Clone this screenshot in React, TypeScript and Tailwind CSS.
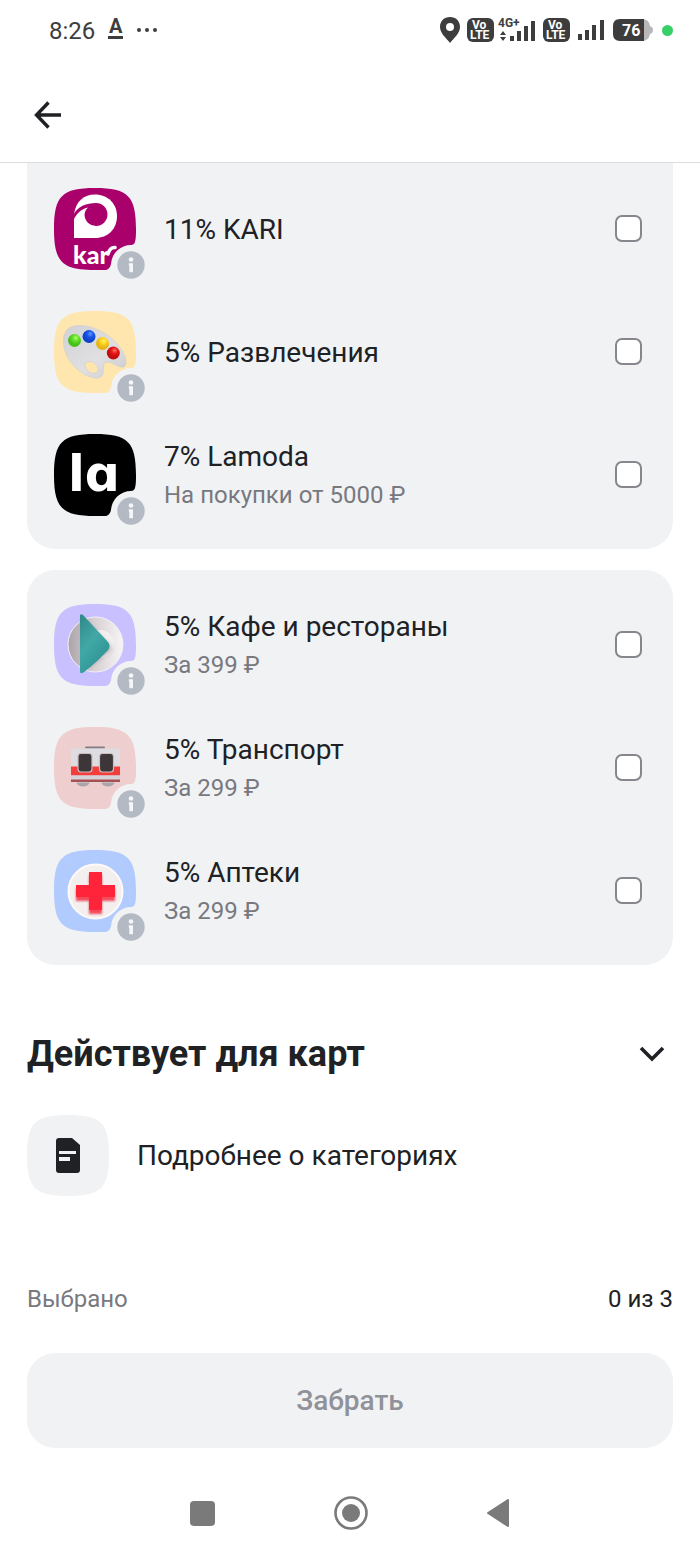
import type { ReactNode } from 'react';

const tileShape =
  'M0 41C0 8 8 0 41 0S82 8 82 41C82 46 82 50 81 54Q80 57 77 57A20 20 0 0 0 57 76Q56 81 52 82L41 82C8 82 0 74 0 41Z';

function Tile({ id, color, children }: { id: string; color: string; children: ReactNode }) {
  return (
    <svg viewBox="0 0 92 92" className="block size-[92px] shrink-0" aria-hidden="true">
      <defs>
        <clipPath id={`${id}-clip`}>
          <path d={tileShape} />
        </clipPath>
      </defs>
      <g clipPath={`url(#${id}-clip)`}>
        <rect width="82" height="82" fill={color} />
        {children}
      </g>
      <circle cx="77" cy="77" r="13.7" fill="#b3bac3" />
      <circle cx="77" cy="71.500" r="2.300" fill="#f5f6f8" />
      <path d="M74.800 75.200h4.200v9h-3.700v-6.500h-.5z" fill="#f5f6f8" />
    </svg>
  );
}

function KariArt() {
  return (
    <>
      <path fill="#fff" d="M20 50V26C22 13 30 6.500 41 6.500C54 6.500 63 16 63 28C63 41 54 50 41 50Z" />
      <path fill="#aa006c" d="M19 28C23 18 33 15 42 15A11.500 11.500 0 1 1 30.500 27C30.500 24 32 21 34 19.500C27 21 22 26 19 33Z" />
      <text x="19" y="76" fontSize="25" fontWeight="900" fontFamily="Lato, sans-serif" fill="#fff">
        kar
      </text>
      <path d="M54 66Q56 59 61 59.500" stroke="#fff" strokeWidth="3.500" fill="none" strokeLinecap="round" />
    </>
  );
}

function PaletteArt() {
  return (
    <>
      <defs>
        <linearGradient id="board" x1="0" y1="0" x2="1" y2="1">
          <stop offset="0" stopColor="#d2d2d5" />
          <stop offset="0.6" stopColor="#e0e0e2" />
          <stop offset="1" stopColor="#cbcbcf" />
        </linearGradient>
        <radialGradient id="green-ball" cx=".6" cy=".3">
          <stop offset="0" stopColor="#b5ff70" />
          <stop offset=".5" stopColor="#62df26" />
          <stop offset="1" stopColor="#45c01c" />
        </radialGradient>
        <radialGradient id="blue-ball" cx=".6" cy=".3">
          <stop offset="0" stopColor="#6795ff" />
          <stop offset=".5" stopColor="#1857ee" />
          <stop offset="1" stopColor="#1043cb" />
        </radialGradient>
        <radialGradient id="yellow-ball" cx=".6" cy=".3">
          <stop offset="0" stopColor="#fff17a" />
          <stop offset=".5" stopColor="#ffd51d" />
          <stop offset="1" stopColor="#e6b514" />
        </radialGradient>
        <radialGradient id="red-ball" cx=".6" cy=".3">
          <stop offset="0" stopColor="#ff7565" />
          <stop offset=".5" stopColor="#e81814" />
          <stop offset="1" stopColor="#c20e0e" />
        </radialGradient>
      </defs>
      <path
        fillRule="evenodd"
        fill="url(#board)"
        stroke="#cdcdd0"
        strokeWidth="0.600"
        d="M17 16C30 11 52 19 64 34C71 42 74 51 71 55C67 59 61 52 54 51C46 51 52 62 47 66C40 70 24 62 16 50C8 39 6 21 17 16ZM33 51C29 53 32 61 38 62C44 63 46 59 42 54C40 51 36 50 33 51Z"
      />
      <circle cx="20.500" cy="29.500" r="6.500" fill="url(#green-ball)" />
      <circle cx="35" cy="25.500" r="6.500" fill="url(#blue-ball)" />
      <circle cx="48.500" cy="32.500" r="6.500" fill="url(#yellow-ball)" />
      <circle cx="59.300" cy="42" r="6.500" fill="url(#red-ball)" />
    </>
  );
}

function LamodaArt() {
  return (
    <text x="14" y="57" fontSize="49" fontWeight="700" fontFamily="DejaVu Sans, sans-serif" fill="#fff">
      lɑ
    </text>
  );
}

function CafeArt() {
  return (
    <>
      <defs>
        <linearGradient id="plate">
          <stop offset="0" stopColor="#aaa3a8" />
          <stop offset=".45" stopColor="#d5ced2" />
          <stop offset="1" stopColor="#f8f4f4" />
        </linearGradient>
        <linearGradient id="napkin" x1="0" y1="0" x2="0.600" y2="1">
          <stop offset="0" stopColor="#2f8888" />
          <stop offset=".5" stopColor="#42a8a6" />
          <stop offset="1" stopColor="#2c9292" />
        </linearGradient>
        <filter id="napkin-shadow" x="-50%" y="-50%" width="200%" height="200%">
          <feGaussianBlur stdDeviation="2.500" />
        </filter>
      </defs>
      <circle cx="41.500" cy="40.500" r="27.500" fill="url(#plate)" stroke="#f5eff4" strokeWidth="1" />
      <circle cx="46" cy="40" r="14" fill="#f3eff1" />
      <path d="M28 14L58 45L32 64Z" fill="#665b65" opacity=".55" filter="url(#napkin-shadow)" />
      <path d="M26 12Q26 9 29 11L54 38Q57 42 54 46Q42 59 30 68Q26 71 26 67Z" fill="url(#napkin)" />
    </>
  );
}

function TransportArt() {
  return (
    <>
      <rect x="31" y="19.500" width="20" height="2" rx="1" fill="#827d82" />
      <path d="M22 55h14q-2 4.500-7 4.500t-7-4.500M47 55h14q-2 4.500-7 4.500t-7-4.500" fill="#aaa5ab" />
      <rect x="17" y="21.500" width="49" height="34" rx="1.500" fill="#dcdce1" />
      <path d="M17 39.500h49v9h-49z" fill="#f43e3c" />
      <path d="M17 48.500h49v4h-49z" fill="#d5d2d9" />
      <path d="M17 52.500h49v2.500h-49z" fill="#a95152" />
      <rect x="24" y="26.500" width="14" height="18.500" rx="3" fill="#3c3639" stroke="#cbbdc1" strokeWidth="1.200" />
      <rect x="45.500" y="26.500" width="14" height="18.500" rx="3" fill="#3c3639" stroke="#cbbdc1" strokeWidth="1.200" />
    </>
  );
}

function PharmacyArt() {
  return (
    <>
      <defs>
        <filter id="cross-shadow" x="-30%" y="-30%" width="160%" height="160%">
          <feGaussianBlur stdDeviation="1.300" />
        </filter>
      </defs>
      <circle cx="41.500" cy="41.500" r="27" fill="#f4efef" stroke="#fffafa" strokeWidth="2" />
      <path d="M35 25h13v13h13v13h-13v13h-13v-13h-13v-13h13z" fill="#f24b5b" filter="url(#cross-shadow)" />
      <path d="M35 22h13v13h13v12h-13v13h-13v-13h-13v-12h13z" fill="#ff2439" />
    </>
  );
}

interface Offer {
  id: string;
  title: string;
  note?: string;
  color: string;
  art: ReactNode;
}

const regularOffers: Offer[] = [
  { id: 'kari', title: '11% KARI', color: '#aa006c', art: <KariArt /> },
  { id: 'fun', title: '5% Развлечения', color: '#ffe6ae', art: <PaletteArt /> },
  { id: 'lamoda', title: '7% Lamoda', note: 'На покупки от 5000 ₽', color: '#000000', art: <LamodaArt /> },
];

const paidOffers: Offer[] = [
  { id: 'cafe', title: '5% Кафе и рестораны', note: 'За 399 ₽', color: '#c8c0ff', art: <CafeArt /> },
  { id: 'transport', title: '5% Транспорт', note: 'За 299 ₽', color: '#efcecf', art: <TransportArt /> },
  { id: 'pharmacy', title: '5% Аптеки', note: 'За 299 ₽', color: '#b1cbff', art: <PharmacyArt /> },
];

function OfferRow({ offer }: { offer: Offer }) {
  return (
    <li>
      <label htmlFor={offer.id} className="flex h-[123px] items-center pr-[31px] pl-[27px]">
        <span className="pt-[10px]">
          <Tile id={offer.id} color={offer.color}>
            {offer.art}
          </Tile>
        </span>
        <span className="ml-[18px] flex flex-1 flex-col pt-0.5">
          <span className="text-[28px] leading-[38px]">{offer.title}</span>
          {offer.note && <span className="text-[24px] leading-[38px] text-[#78797f]">{offer.note}</span>}
        </span>
        <input
          id={offer.id}
          type="checkbox"
          className="size-[27px] shrink-0 appearance-none rounded-[7px] border-2 border-[#86868c] bg-white checked:bg-[#202124]"
        />
      </label>
    </li>
  );
}

function Volte() {
  return (
    <svg viewBox="0 0 27 24" className="h-6 w-[27px]" aria-hidden="true">
      <rect width="27" height="24" rx="6" fill="#3d3d3d" />
      <g fill="#fff" fontFamily="Roboto, sans-serif" fontWeight="700" fontSize="12">
        <text x="5" y="11">Vo</text>
        <text x="3" y="21">LTE</text>
      </g>
    </svg>
  );
}

function StatusBar() {
  return (
    <div className="flex h-[60px] items-center pr-[27px] pl-[49px] text-[#3d3d3d]">
      <span className="pt-0.5 text-[24px] leading-8">8:26</span>
      <svg viewBox="0 -6 50 36" className="ml-[13px] h-9 w-[50px]" aria-hidden="true">
        <text x="1" y="15" fontSize="20" fontWeight="700" fontFamily="Roboto, sans-serif" fill="currentColor">
          A
        </text>
        <path d="M0 18h15v3H0z" fill="currentColor" />
        <g fill="currentColor">
          <circle cx="31" cy="12" r="2" />
          <circle cx="39" cy="12" r="2" />
          <circle cx="47" cy="12" r="2" />
        </g>
      </svg>
      <div className="ml-auto flex items-center">
        <svg viewBox="0 0 20 26" className="h-[26px] w-5" aria-hidden="true">
          <path fillRule="evenodd" fill="currentColor" d="M10 0C4 0 0 4 0 10C0 16 6 21 10 26C14 21 20 16 20 10C20 4 16 0 10 0ZM10 6A4 4 0 1 1 10 14A4 4 0 0 1 10 6Z" />
        </svg>
        <span className="ml-[7px]"><Volte /></span>
        <svg viewBox="0 -2 39 32" className="ml-1 h-8 w-[39px]" aria-hidden="true">
          <text x="0" y="11" fontSize="12" fontWeight="700" fontFamily="Roboto, sans-serif" fill="currentColor">
            4G+
          </text>
          <path fill="currentColor" d="M2 19l3-4 3 4zM2 21h6l-3 4zM12 20h4v5h-4zM19 15h4v10h-4zM26 10h4v15h-4zM33 5h4v20h-4z" />
        </svg>
        <span className="ml-1.5"><Volte /></span>
        <svg viewBox="0 0 26 20" className="ml-2 h-5 w-[26px]" aria-hidden="true">
          <path fill="currentColor" d="M0 14h4v6H0zM7 10h4v10H7zM14 5h4v15h-4zM22 0h4v20h-4z" />
        </svg>
        <svg viewBox="0 0 40 22" className="ml-[9px] h-[22px] w-10" aria-hidden="true">
          <path d="M29 0Q36 0 37 7Q40 8 40 11Q40 14 37 15Q36 22 29 22Z" fill="#b8b8b8" />
          <path d="M7 0H31V22H7Q0 22 0 15V7Q0 0 7 0Z" fill="currentColor" />
          <text x="9" y="17" fontSize="16" fontWeight="700" fontFamily="Roboto, sans-serif" fill="#fff">
            76
          </text>
        </svg>
        <span className="ml-[9px] size-[11px] rounded-full bg-[#37d067]" />
      </div>
    </div>
  );
}

export default function App() {
  return (
    <div className="bg-white font-['Roboto','Noto_Sans',sans-serif] text-[#202124]">
      <StatusBar />
      <header className="flex h-[103px] items-start border-b border-[#dcdde0] px-[27px] pt-[35px]">
        <button type="button" aria-label="Назад" className="p-1">
          <svg viewBox="0 0 32 32" className="block size-8" fill="none" stroke="currentColor" strokeWidth="3.400" aria-hidden="true">
            <path d="M30 16H6M17.500 3.500L5.500 16L17.500 28.500" />
          </svg>
        </button>
      </header>

      <main className="px-[27px]">
        <ul className="rounded-b-[28px] bg-[#f1f2f4] pt-1 pb-[13px]">
          {regularOffers.map((offer) => <OfferRow key={offer.id} offer={offer} />)}
        </ul>
        <ul className="mt-[21px] rounded-[28px] bg-[#f1f2f4] py-[13px]">
          {paidOffers.map((offer) => <OfferRow key={offer.id} offer={offer} />)}
        </ul>

        <h2 className="mt-16">
          <button type="button" className="flex w-full items-center justify-between pr-2 text-left text-[36px] leading-[50px] font-bold">
            Действует для карт
            <svg viewBox="0 0 26 18" className="h-[18px] w-[26px]" fill="none" stroke="currentColor" strokeWidth="3.600" aria-hidden="true">
              <path d="M2 3L13 14L24 3" />
            </svg>
          </button>
        </h2>

        <a href="#categories" className="mt-9 flex items-center gap-7 text-[28px] leading-[38px]">
          <svg viewBox="0 0 82 81" className="h-[81px] w-[82px]" aria-hidden="true">
            <path d="M0 40.500C0 8 8 0 41 0S82 8 82 40.500S74 81 41 81S0 73 0 40.500Z" fill="#f1f2f4" />
            <path d="M32 23H45L53 30V55Q53 58 50 58H32Q29 58 29 55V26Q29 23 32 23Z" fill="#202124" />
            <path d="M32 36h17v3H32zM32 42h11v4H32z" fill="#f1f2f4" />
          </svg>
          Подробнее о категориях
        </a>
      </main>

      <footer className="px-[27px] pt-[84px]">
        <div className="flex justify-between text-[24px] leading-[38px]">
          <span className="text-[#78797f]">Выбрано</span>
          <span>0 из 3</span>
        </div>
        <button type="button" className="mt-[35px] h-[95px] w-full rounded-[28px] bg-[#f1f2f4] text-[28px] font-medium text-[#919299]">
          Забрать
        </button>
      </footer>

      <nav className="mx-auto flex h-[108px] w-[320px] items-center justify-between pt-[22px] text-[#7a7a7a]">
        <button type="button" aria-label="Недавние">
          <svg viewBox="0 0 25 25" className="block size-[25px]" aria-hidden="true">
            <rect width="25" height="25" rx="4" fill="currentColor" />
          </svg>
        </button>
        <button type="button" aria-label="Домой">
          <svg viewBox="0 0 34 34" className="block size-[34px]" aria-hidden="true">
            <circle cx="17" cy="17" r="15.500" fill="none" stroke="currentColor" strokeWidth="2.600" />
            <circle cx="17" cy="17" r="9" fill="currentColor" />
          </svg>
        </button>
        <button type="button" aria-label="Назад в системе">
          <svg viewBox="0 0 24 28" className="block h-7 w-6" aria-hidden="true">
            <path d="M2 14L22 1V27Z" fill="currentColor" stroke="currentColor" strokeWidth="2" strokeLinejoin="round" />
          </svg>
        </button>
      </nav>
    </div>
  );
}
